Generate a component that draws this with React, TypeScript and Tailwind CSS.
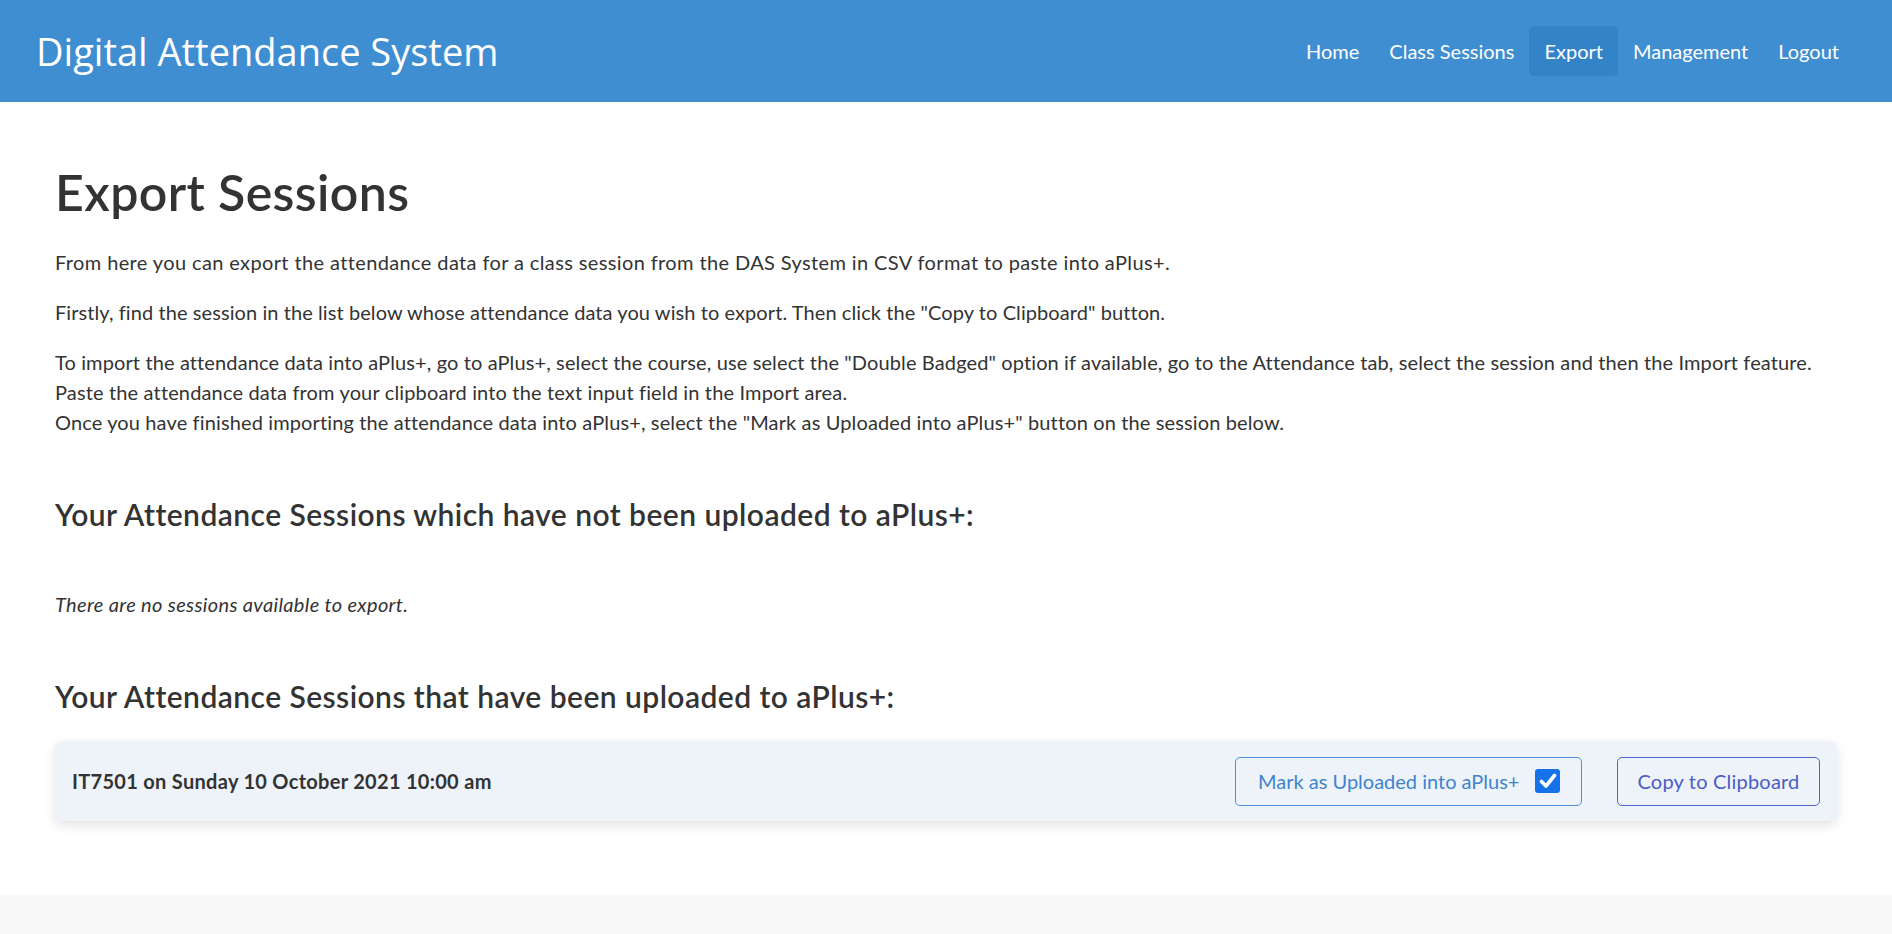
import React from "react";

export default function App() {
  return (
    <div className="min-h-[934px] bg-white flex flex-col text-[#333333] font-['Lato','Open_Sans',sans-serif]">
      <nav className="h-[102px] bg-[#3f8ed1] flex items-center justify-between pl-[36px] pr-[38px]">
        <div className="text-white text-[38px] font-normal leading-none font-['Open_Sans',sans-serif]">Digital Attendance System</div>
        <div className="flex items-center text-[20px] text-white">
          <a className="px-[15px] py-[10px] leading-[30px]">Home</a>
          <a className="px-[15px] py-[10px] leading-[30px]">Class Sessions</a>
          <a className="px-[15px] py-[10px] leading-[30px] bg-[#3383c8] rounded-[5px]">Export</a>
          <a className="px-[15px] py-[10px] leading-[30px]">Management</a>
          <a className="px-[15px] py-[10px] leading-[30px]">Logout</a>
        </div>
      </nav>
      <main className="flex-1 px-[55px] pt-[60px] pb-[50px] flex flex-col">
        <h1 className="text-[50px] font-semibold leading-[60px] mb-[25px] tracking-[0.4px]">Export Sessions</h1>
        <p className="text-[20px] leading-[30px] mb-[20px] tracking-[0.38px]">
          From here you can export the attendance data for a class session from the DAS System in CSV format to paste into aPlus+.
        </p>
        <p className="text-[20px] leading-[30px] mb-[20px] tracking-[0.08px]">
          Firstly, find the session in the list below whose attendance data you wish to export. Then click the "Copy to Clipboard" button.
        </p>
        <div className="text-[20px] leading-[30px] mb-[59px] flex flex-col">
          <span className="whitespace-nowrap tracking-[0.12px]">
            To import the attendance data into aPlus+, go to aPlus+, select the course, use select the "Double Badged" option if available, go to the Attendance tab, select the session and then the Import feature.
          </span>
          <span className="whitespace-nowrap tracking-[0.15px]">
            Paste the attendance data from your clipboard into the text input field in the Import area.
          </span>
          <span className="whitespace-nowrap tracking-[0.13px]">
            Once you have finished importing the attendance data into aPlus+, select the "Mark as Uploaded into aPlus+" button on the session below.
          </span>
        </div>
        <h4 className="text-[30px] font-semibold leading-[36px] mb-[57px] tracking-[0.45px]">
          Your Attendance Sessions which have not been uploaded to aPlus+:
        </h4>
        <p className="text-[20px] leading-[30px] italic mb-[59px] tracking-[0.35px]">There are no sessions available to export.</p>
        <h4 className="text-[30px] font-semibold leading-[36px] mb-[27px] tracking-[0.45px]">
          Your Attendance Sessions that have been uploaded to aPlus+:
        </h4>
        <div className="h-[80px] bg-[#eef3fa] rounded-[8px] shadow-[0_4px_12px_rgba(0,0,0,0.12)] flex items-center justify-between pl-[17px] pr-[17px]">
          <div className="text-[20px] font-bold text-[#333333] tracking-[0.3px]">IT7501 on Sunday 10 October 2021 10:00 am</div>
          <div className="flex items-center gap-[35px]">
            <button className="h-[49px] w-[347px] border border-[#4a90d9] rounded-[5px] text-[#3f83cc] text-[20px] flex items-center justify-between pl-[22px] pr-[21px]">
              <span>Mark as Uploaded into aPlus+</span>
              <span className="w-[25px] h-[24px] bg-[#1672e8] rounded-[3px] flex items-center justify-center">
                <svg width="18" height="16" viewBox="0 0 18 16">
                  <path d="M2.5 8.5 L7 13 L15.5 2.5" stroke="white" strokeWidth="3.6" fill="none" strokeLinecap="round" strokeLinejoin="round" />
                </svg>
              </span>
            </button>
            <button className="h-[49px] w-[203px] border border-[#4d63cb] rounded-[5px] text-[#4a5cc6] text-[20px] flex items-center justify-center tracking-[0.2px]">
              Copy to Clipboard
            </button>
          </div>
        </div>
      </main>
      <footer className="h-[39px] bg-[#f9f9f9]" />
    </div>
  );
}
